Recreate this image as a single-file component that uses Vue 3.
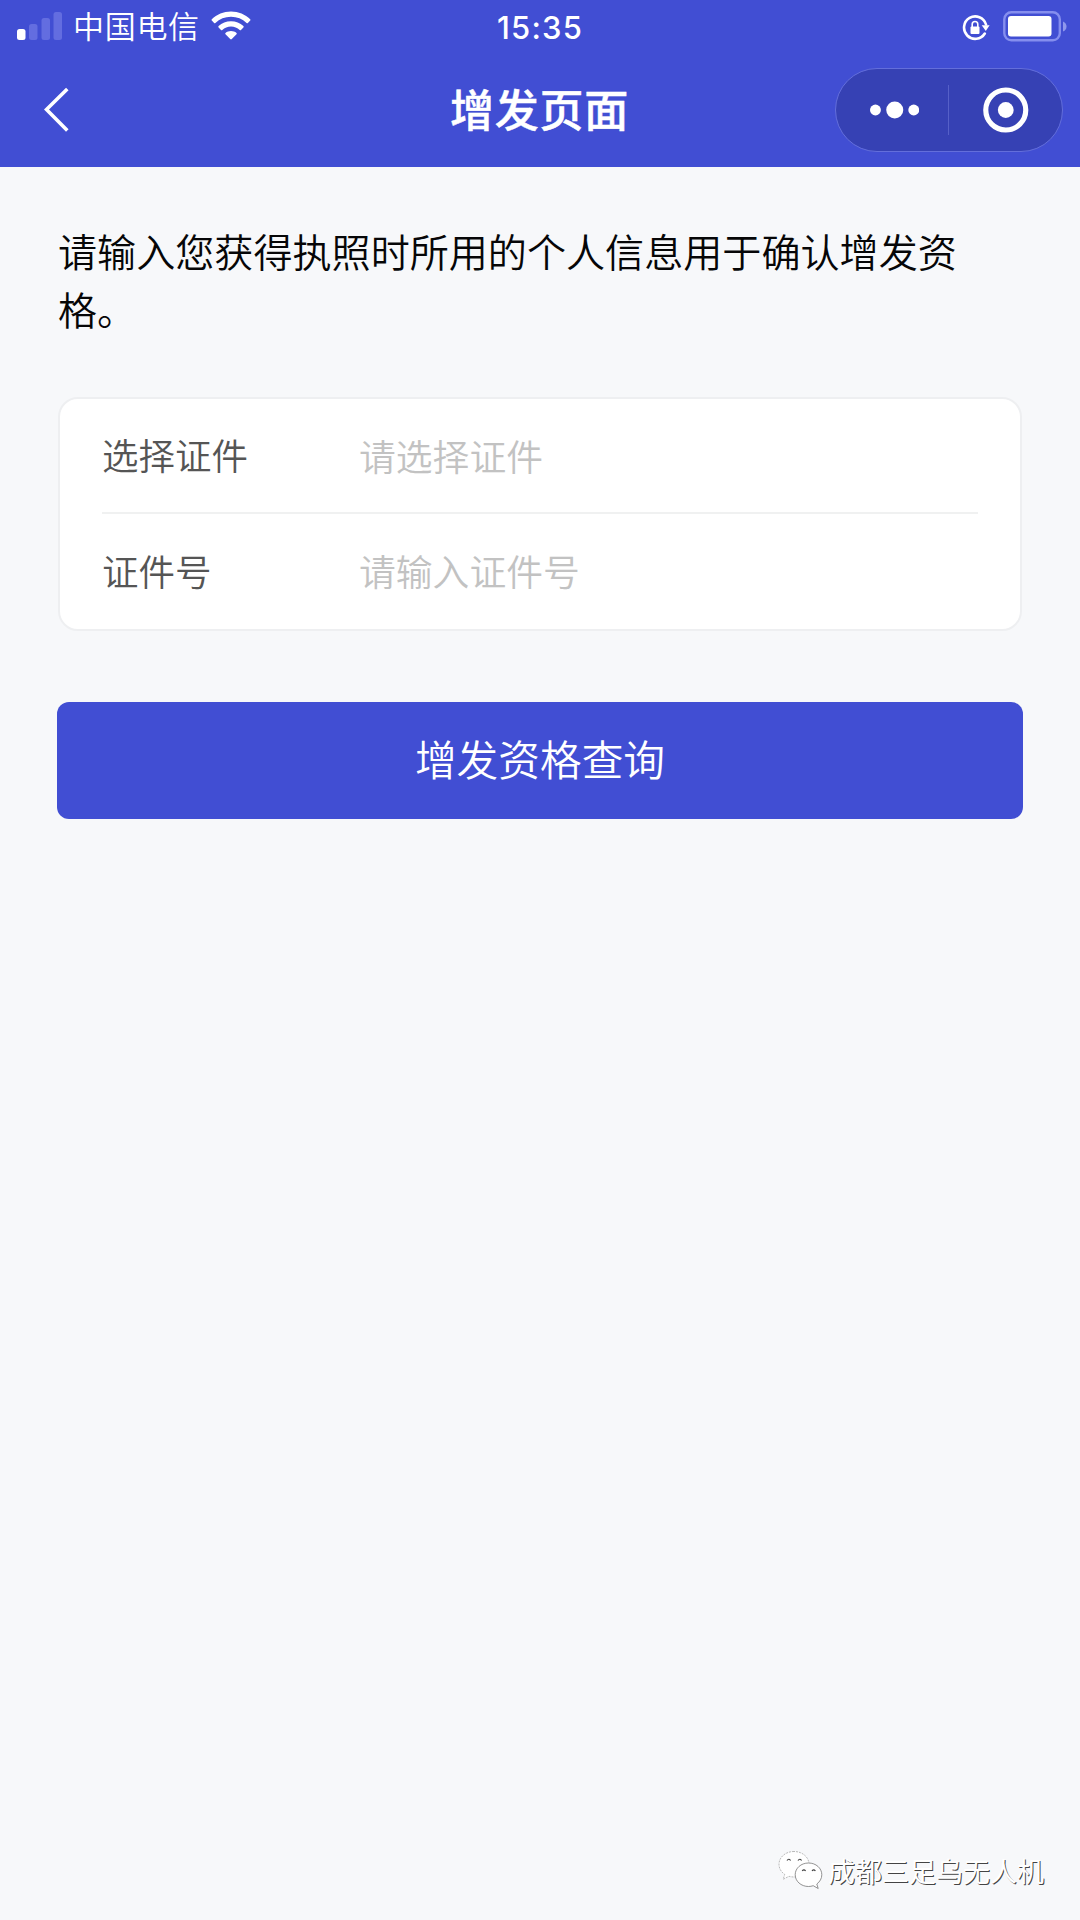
<script setup>
import { ref } from 'vue'

const fields = ref([
  { label: '选择证件', placeholder: '请选择证件' },
  { label: '证件号', placeholder: '请输入证件号' },
])
</script>

<template>
  <div class="page">
    <header class="header">
      <div class="status-bar">
        <div class="status-left">
          <svg class="signal" width="46" height="30" viewBox="0 0 46 30">
            <rect x="0" y="18" width="8.5" height="11" rx="2.5" fill="#fff" />
            <rect x="12" y="13" width="8.5" height="16" rx="2.5" fill="#636de0" />
            <rect x="24.500" y="7" width="8.5" height="22" rx="2.5" fill="#636de0" />
            <rect x="36.500" y="1" width="8.5" height="28" rx="2.5" fill="#636de0" />
          </svg>
          <span class="carrier">中国电信</span>
          <svg class="wifi" width="40" height="30" viewBox="0 0 40 30">
            <path d="M20 .5C12.500.5 5.800 3.500.8 8.200q-.7.700 0 1.400l2.300 2.300q.6.600 1.300 0C8.600 8 14 5.800 20 5.800S31.400 8 35.600 11.900q.7.600 1.300 0l2.300-2.300q.7-.7 0-1.400C34.200 3.500 27.500.5 20 .5z" />
            <path d="M20 10.300c-4.800 0-9.100 1.800-12.400 4.800q-.7.700 0 1.400l2.400 2.400q.6.500 1.300 0c2.300-2.100 5.400-3.400 8.700-3.400s6.400 1.300 8.700 3.400q.7.500 1.300 0l2.400-2.400q.7-.7 0-1.400c-3.300-3-7.600-4.800-12.400-4.800z" />
            <path d="M20 20c-2.100 0-4 .7-5.500 1.900q-.7.700 0 1.400l4.700 4.800q.8.700 1.600 0l4.700-4.800q.7-.7 0-1.400C24 20.700 22.100 20 20 20z" />
          </svg>
        </div>
        <div class="time">15:35</div>
        <div class="status-right">
          <svg class="lock" width="28" height="28" viewBox="0 0 28 28">
            <path d="M22.800 19.500A11.200 11.200 0 1 1 24 10.500" fill="none" stroke="#fff" stroke-width="2.600" stroke-linecap="round" />
            <path d="M19.700 11.300h7.900l-3.800 5.600z" fill="#fff" />
            <rect x="8.500" y="12.500" width="9" height="7.500" rx="1" fill="#fff" />
            <path d="M10.200 13V10.300a2.800 2.800 0 0 1 5.600 0v2.700" fill="none" stroke="#fff" stroke-width="1.600" />
          </svg>
          <svg class="battery" width="65" height="31" viewBox="0 0 65 31">
            <rect x="1.300" y="1.300" width="55.500" height="28" rx="7" fill="none" stroke="#858eee" stroke-width="2.400" />
            <rect x="5" y="5" width="43.500" height="20.500" rx="3" fill="#fff" />
            <path d="M60 10.500q3.500 1.500 3.500 5t-3.500 5z" fill="#8f98ec" />
          </svg>
        </div>
      </div>
      <div class="nav-bar">
        <svg class="back" width="26" height="46" viewBox="0 0 26 46">
          <path d="M23.300 2L2.500 22.500L23.300 43.500" fill="none" stroke="#fff" stroke-width="3.600" />
        </svg>
        <h1 class="title">增发页面</h1>
        <div class="capsule">
          <svg class="dots" width="50" height="18" viewBox="0 0 50 18">
            <circle cx="5.500" cy="9" r="5.500" />
            <circle cx="25" cy="9" r="8.600" />
            <circle cx="44.200" cy="9" r="5.500" />
          </svg>
          <span class="capsule-line"></span>
          <svg class="target" width="46" height="46" viewBox="0 0 46 46">
            <circle cx="23" cy="23" r="20.200" fill="none" stroke="#fff" stroke-width="5.200" />
            <circle cx="23" cy="23" r="8" fill="#fff" />
          </svg>
        </div>
      </div>
    </header>

    <main class="content">
      <p class="tip">请输入您获得执照时所用的个人信息用于确认增发资格。</p>

      <div class="card">
        <div v-for="item in fields" :key="item.label" class="row">
          <span class="label">{{ item.label }}</span>
          <span class="placeholder">{{ item.placeholder }}</span>
        </div>
      </div>

      <button class="btn-query">增发资格查询</button>
    </main>

    <footer class="account">
      <svg class="wechat" width="46" height="42" viewBox="0 0 46 42">
        <g fill="#fff" stroke="#777" stroke-width=".8">
          <path d="M16 1.500C7.500 1.500 1 7.200 1 14.300c0 4.200 2.200 7.700 5.700 10.100L5.200 29.300l5.800-3c1.600.5 3.300.7 5 .7 8.500 0 15-5.700 15-12.700S24.500 1.500 16 1.500z" stroke="#aaa" stroke-dasharray="2 1" />
          <path d="M30.500 13c-7.500 0-13.300 5.200-13.300 11.700S23 36.500 30.500 36.500c1.700 0 3.200-.3 4.700-.8l5 2.800-1.400-4.500c3.100-2.200 5-5.500 5-9.300C43.800 18.200 38 13 30.500 13z" />
        </g>
        <g fill="none" stroke="#444" stroke-width="1.200">
          <path d="M9 10.500q1.700-2.500 3.600 0M20 10.500q1.700-2.500 3.600 0M24.200 21q1.700-2.300 3.400 0M34 21q1.700-2.300 3.400 0" />
        </g>
      </svg>
      <span class="account-name">成都三足乌无人机</span>
    </footer>
  </div>
</template>

<style>
body {
  margin: 0;
  background: #f7f8fa;
}
</style>

<style scoped>
.page {
  display: flex;
  flex-direction: column;
  box-sizing: border-box;
  width: 1080px;
  height: 1920px;
  background: #f7f8fa;
  font-family: "Noto Sans CJK SC", sans-serif;
  font-weight: 350;
  overflow: hidden;
}

.header {
  height: 167px;
  background: #414ed3;
  color: #fff;
}

.status-bar {
  display: grid;
  grid-template-columns: 1fr auto 1fr;
  align-items: center;
  height: 54px;
  padding: 0 12px 0 17px;
}

.status-left,
.status-right {
  display: flex;
  align-items: center;
}

.status-right {
  justify-content: flex-end;
}

.signal {
  margin-top: -2px;
}

.carrier {
  margin: -4px 0 0 10px;
  font-size: 31px;
  line-height: 54px;
  letter-spacing: 0.7px;
}

.wifi {
  margin: -3px 0 0 11px;
  fill: #fff;
}

.time {
  margin-left: -5px;
  font-family: Inter, sans-serif;
  font-size: 31px;
  font-weight: 500;
  letter-spacing: 1.2px;
}

.lock {
  margin-top: 1px;
}

.battery {
  margin: -2px 0 0 13px;
}

.nav-bar {
  display: grid;
  grid-template-columns: 1fr auto 1fr;
  align-items: center;
  height: 112px;
  padding: 0 17px 0 44px;
}

.title {
  margin: -4px 0 0 -28px;
  font-size: 44px;
  font-weight: 500;
  line-height: 64px;
  letter-spacing: 0.8px;
  -webkit-text-stroke: 0.5px #fff;
}

.capsule {
  display: flex;
  align-items: center;
  justify-self: end;
  box-sizing: border-box;
  width: 228px;
  height: 84px;
  padding: 0 33px 0 34px;
  border: 1px solid #636edb;
  border-radius: 42px;
  background: #3641b4;
}

.dots {
  fill: #fff;
}

.capsule-line {
  width: 1px;
  height: 50px;
  margin: 0 34px 0 29px;
  background: #5660c8;
}

.content {
  flex: 1;
  padding: 54px 57px 0;
}

.tip {
  margin: 0 0 0 1px;
  color: #060607;
  font-size: 39.1px;
  line-height: 58px;
}

.card {
  margin: 60px 1px 0;
  padding: 0 42px 1px;
  border: 2px solid #eeeff1;
  border-radius: 20px;
  background: #fff;
}

.row {
  display: flex;
  align-items: center;
  box-sizing: border-box;
  height: 113px;
  padding-bottom: 2px;
  font-size: 36.5px;
}

.row + .row {
  height: 116px;
  border-top: 2px solid #f0f1f1;
}

.label {
  width: 257px;
  color: #555;
}

.placeholder {
  color: #c2c2c2;
  font-size: 36.8px;
}

.btn-query {
  display: block;
  width: 100%;
  height: 117px;
  margin: 71px 0 0;
  padding: 0 0 5px;
  border: 0;
  border-radius: 12px;
  background: #414ed3;
  color: #fff;
  font-family: inherit;
  font-size: 41.7px;
  font-weight: 350;
}

.account {
  display: flex;
  align-items: center;
  justify-content: flex-end;
  height: 42px;
  padding: 0 36px 28px 0;
}

.account-name {
  margin: -1px 0 0 4px;
  color: #fff;
  font-size: 27px;
  font-weight: 400;
  line-height: 42px;
  text-shadow: 1px 1px 0 #444;
}
</style>
